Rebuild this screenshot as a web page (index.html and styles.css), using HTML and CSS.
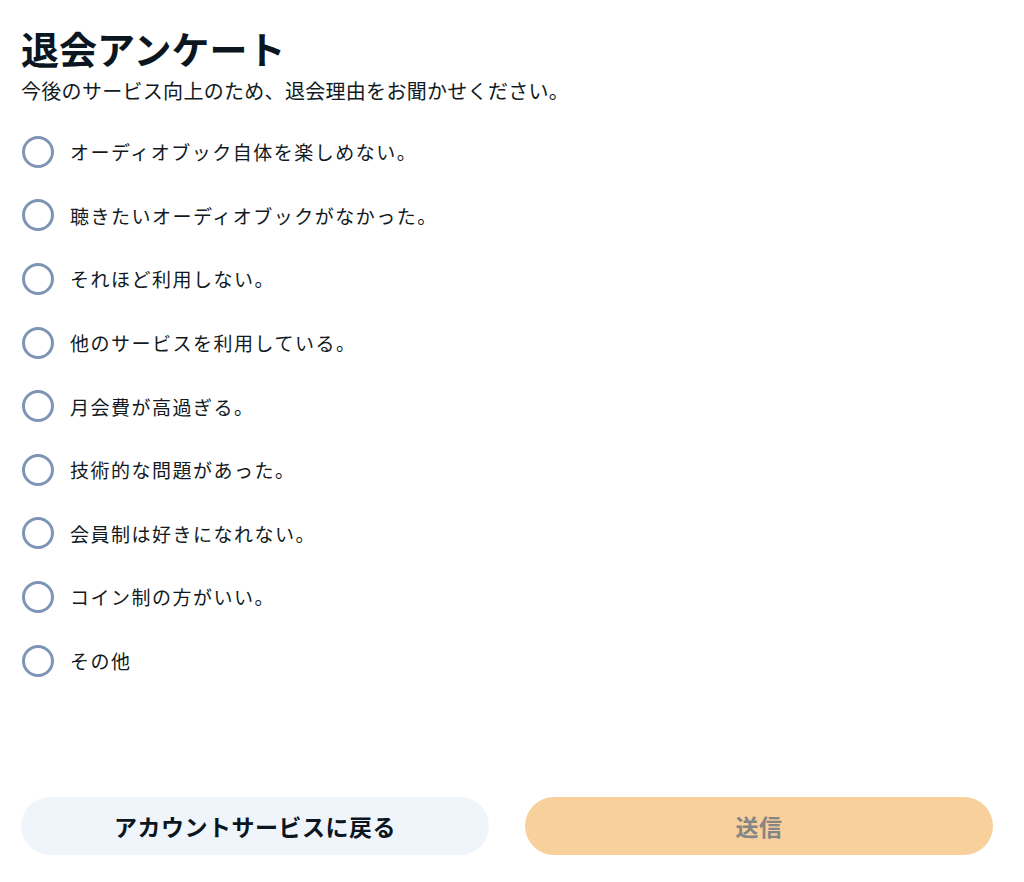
FILE: index.html
```html
<!DOCTYPE html>
<html lang="ja">

<head>
  <meta charset="UTF-8">
  <meta name="viewport" content="width=device-width, initial-scale=1.0">
  <title>退会アンケート</title>
  <link rel="stylesheet" href="styles.css">
</head>

<body>

  <section class="survey">
    <h1>退会アンケート</h1>
    <p class="lead">今後のサービス向上のため、退会理由をお聞かせください。</p>

    <ul class="reasons">
      <li><label><span class="radio"></span>オーディオブック自体を楽しめない。</label></li>
      <li><label><span class="radio"></span>聴きたいオーディオブックがなかった。</label></li>
      <li><label><span class="radio"></span>それほど利用しない。</label></li>
      <li><label><span class="radio"></span>他のサービスを利用している。</label></li>
      <li><label><span class="radio"></span>月会費が高過ぎる。</label></li>
      <li><label><span class="radio"></span>技術的な問題があった。</label></li>
      <li><label><span class="radio"></span>会員制は好きになれない。</label></li>
      <li><label><span class="radio"></span>コイン制の方がいい。</label></li>
      <li><label><span class="radio"></span>その他</label></li>
    </ul>

    <div class="actions">
      <button class="back">アカウントサービスに戻る</button>
      <button class="send" disabled>送信</button>
    </div>
  </section>

</body>

</html>
```

FILE: styles.css
```css
* {
  margin: 0;
  padding: 0;
  box-sizing: border-box;
  font-family: "Noto Sans CJK JP", "Noto Sans", sans-serif;
}

body {
  background-color: #fff;
  color: #111a22;
}

.survey {
  width: 972px;
  height: 882px;
  margin-left: 21px;
  padding-top: 24px;
  display: flex;
  flex-direction: column;
}

.survey h1 {
  font-size: 38px;
  font-weight: bold;
  line-height: 48px;
  color: #0b1620;
}

.lead {
  font-size: 20px;
  letter-spacing: 0.3px;
  line-height: 28px;
  margin-top: 5px;
}

.reasons {
  list-style: none;
  margin-top: 15px;
}

.reasons li {
  height: 63.6px;
  display: flex;
  align-items: center;
}

.reasons label {
  display: flex;
  align-items: center;
  gap: 16px;
  font-size: 19px;
  letter-spacing: 1.5px;
  cursor: pointer;
}

.radio {
  width: 32px;
  height: 32px;
  border: 3px solid #7f95b5;
  border-radius: 50%;
  margin-left: 1px;
}

.actions {
  margin-top: auto;
  margin-bottom: 27px;
  display: grid;
  grid-template-columns: 1fr 1fr;
  gap: 36px;
}

.actions button {
  height: 58px;
  border: none;
  border-radius: 29px;
  font-size: 23px;
  letter-spacing: 0.5px;
  font-weight: bold;
  cursor: pointer;
}

.back {
  background-color: #f0f5fc;
  color: #0b1620;
}

.send {
  background-color: #f8d09b;
  color: #858585;
}
```
